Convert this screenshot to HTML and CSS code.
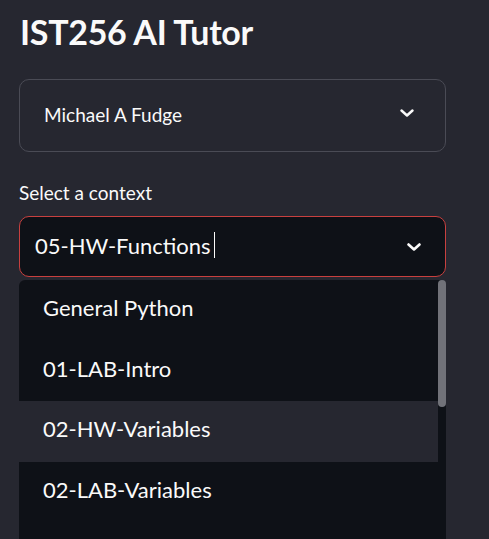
FILE: index.html
```html
<!DOCTYPE html>
<html lang="en">
<head>
<meta charset="utf-8">
<title>IST256 AI Tutor</title>
<link rel="stylesheet" href="styles.css">
</head>
<body>
<main class="sidebar">
  <h1 class="title">IST256 AI Tutor</h1>
  <div class="select select-user">
    <span class="select-value">Michael A Fudge</span>
    <svg class="chevron" width="14" height="8" viewBox="0 0 14 8"><path d="M1.5 1.5 L7 6.5 L12.5 1.5" fill="none" stroke="#fafafa" stroke-width="2.4" stroke-linecap="round" stroke-linejoin="round"/></svg>
  </div>
  <label class="field-label">Select a context</label>
  <div class="select select-context">
    <span class="select-value context-value">05-HW-Functions<span class="caret"></span></span>
    <svg class="chevron" width="14" height="8" viewBox="0 0 14 8"><path d="M1.5 1.5 L7 6.5 L12.5 1.5" fill="none" stroke="#fafafa" stroke-width="2.6" stroke-linecap="round" stroke-linejoin="round"/></svg>
  </div>
  <div class="menu">
    <ul class="options">
      <li class="option">General Python</li>
      <li class="option">01-LAB-Intro</li>
      <li class="option option-active">02-HW-Variables</li>
      <li class="option">02-LAB-Variables</li>
    </ul>
    <div class="scrolltrack"><div class="thumb"></div></div>
  </div>
</main>
</body>
</html>
```
FILE: styles.css
```css
html, body {
  margin: 0;
  padding: 0;
  height: 100%;
  overflow: hidden;
}
body {
  background: #262730;
  color: #fafafa;
  font-family: "Lato", "Noto Sans", sans-serif;
}
.sidebar {
  width: 427px;
  margin-left: 19px;
  display: flex;
  flex-direction: column;
}
.title {
  margin: 0;
  padding-top: 12px;
  font-size: 34px;
  font-weight: 700;
  line-height: 40px;
  letter-spacing: -0.3px;
  padding-left: 1px;
}
.select {
  box-sizing: border-box;
  display: flex;
  align-items: center;
  justify-content: space-between;
  border-radius: 10px;
}
.select-user {
  margin-top: 27px;
  height: 73px;
  border: 1px solid #4a4b55;
  padding: 0 31px 0 24px;
  font-size: 19px;
}
.select-user .chevron { margin-top: -5px; }
.select-user .select-value { margin-top: -2px; }
.field-label {
  margin-top: 29px;
  font-size: 19px;
  line-height: 24px;
}
.select-context {
  margin-top: 11px;
  height: 61px;
  background: #0e1117;
  border: 1.5px solid #c8403f;
  padding: 0 24px 0 15px;
  font-size: 22px;
}
.context-value {
  display: flex;
  align-items: center;
  margin-top: -3px;
}
.caret {
  display: inline-block;
  width: 1.5px;
  height: 26px;
  background: #fafafa;
  margin-left: 3px;
}
.menu {
  margin-top: 3px;
  display: grid;
  grid-template-columns: 1fr 8px;
  background: #0e1117;
  border-top-left-radius: 6px;
  border-top-right-radius: 6px;
  height: 300px;
}
.options {
  list-style: none;
  margin: 0;
  padding: 0;
}
.option {
  box-sizing: border-box;
  height: 60.5px;
  display: flex;
  align-items: center;
  padding-left: 24px;
  padding-bottom: 5px;
  font-size: 22px;
}
.option-active {
  background: #262730;
}
.scrolltrack {
  display: flex;
  flex-direction: column;
}
.thumb {
  height: 127px;
  background: #717279;
  border-radius: 4px;
}
```
